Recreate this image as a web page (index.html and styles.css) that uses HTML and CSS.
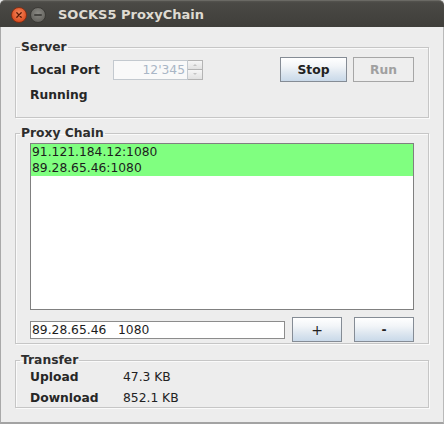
FILE: index.html
```html
<!DOCTYPE html>
<html>
<head>
<meta charset="utf-8">
<title>SOCKS5 ProxyChain</title>
<link rel="stylesheet" href="styles.css">
</head>
<body>
<div class="window">
  <div class="titlebar">
    <span class="wbtn">
      <svg width="16" height="16" viewBox="0 0 16 16">
        <defs>
          <radialGradient id="gc" cx="50%" cy="40%" r="60%">
            <stop offset="0" stop-color="#f68a5e"/>
            <stop offset="1" stop-color="#d9461a"/>
          </radialGradient>
        </defs>
        <circle cx="8" cy="8" r="7.5" fill="url(#gc)" stroke="#7a2a10" stroke-width="0.8"/>
        <path d="M5.8 5.8 L10.2 10.2 M10.2 5.8 L5.8 10.2" stroke="#5a1a06" stroke-width="1.3" stroke-linecap="round"/>
      </svg>
    </span>
    <span class="wbtn">
      <svg width="16" height="16" viewBox="0 0 16 16">
        <defs>
          <radialGradient id="gm" cx="50%" cy="40%" r="60%">
            <stop offset="0" stop-color="#8a8984"/>
            <stop offset="1" stop-color="#62615c"/>
          </radialGradient>
        </defs>
        <circle cx="8" cy="8" r="7.5" fill="url(#gm)" stroke="#33322e" stroke-width="0.8"/>
        <path d="M4.8 8 L11.2 8" stroke="#33322f" stroke-width="1.6" stroke-linecap="round"/>
      </svg>
    </span>
    <span class="title">SOCKS5 ProxyChain</span>
  </div>

  <div class="main">
    <fieldset class="group server">
      <legend>Server</legend>
      <div class="server-body">
        <span class="label">Local Port</span>
        <div class="spinner">
          <span class="spin-field">12'345</span>
          <span class="spin-btns">
            <span class="spin-btn"><span class="arr up"></span></span>
            <span class="spin-btn"><span class="arr down"></span></span>
          </span>
        </div>
        <div class="actions">
          <button class="btn stop">Stop</button>
          <button class="btn run" disabled>Run</button>
        </div>
        <span class="label status">Running</span>
      </div>
    </fieldset>

    <fieldset class="group proxy">
      <legend>Proxy Chain</legend>
      <div class="proxy-body">
        <div class="list">
          <div class="row sel">91.121.184.12:1080</div>
          <div class="row sel">89.28.65.46:1080</div>
        </div>
        <div class="entry">
          <div class="textfield">89.28.65.46   1080</div>
          <button class="btn plus">+</button>
          <button class="btn minus">-</button>
        </div>
      </div>
    </fieldset>

    <fieldset class="group transfer">
      <legend>Transfer</legend>
      <div class="transfer-body">
        <span class="label">Upload</span><span class="value">47.3 KB</span>
        <span class="label">Download</span><span class="value">852.1 KB</span>
      </div>
    </fieldset>
  </div>
</div>
</body>
</html>
```

FILE: styles.css
```css
html, body {
  margin: 0;
  padding: 0;
  background: #e6e6e6;
}

body {
  font-family: "DejaVu Sans", "Liberation Sans", sans-serif;
  font-size: 12.3px;
  color: #222;
}

.window {
  width: 444px;
  height: 424px;
  display: flex;
  flex-direction: column;
}

.titlebar {
  height: 27px;
  flex: none;
  box-sizing: border-box;
  display: flex;
  align-items: center;
  padding-left: 11px;
  padding-top: 1px;
  border-radius: 5px 5px 0 0;
  background: linear-gradient(to bottom, #55544f 0, #4a4945 2px, #3f3e3a 100%);
  border-top: 1px solid #6a6964;
}

.wbtn {
  display: flex;
  width: 16px;
  height: 16px;
  margin-right: 3px;
}

.title {
  margin-left: 9px;
  font-weight: bold;
  font-size: 13px;
  color: #dfdbd2;
}

.main {
  flex: 1;
  background: #ededed;
  border-left: 1px solid #a9a9a9;
  border-right: 1px solid #b9b9b9;
  border-bottom: 2px solid #a3a3a3;
}

.group {
  margin: 0 14px;
  padding: 0;
  min-width: 0;
  border: 1px solid #c6c6c6;
  box-shadow: 1px 1px 0 #fafafa, inset 1px 1px 0 #fafafa;
}

.group legend {
  margin-left: 4px;
  padding: 0 1px;
  font-weight: bold;
  line-height: 15px;
  color: #2e2e2e;
}

.server { margin-top: 13px; }
.proxy { margin-top: 8px; }
.transfer { margin-top: 9px; }

.label {
  font-weight: bold;
  color: #262626;
}

/* Server */
.server-body {
  padding: 2px 14px 13px;
  display: grid;
  grid-template-columns: 83px 90px 1fr auto;
  grid-template-rows: 25px 18px;
  row-gap: 4px;
  align-items: center;
  line-height: 18px;
}

.spinner {
  display: flex;
  height: 20px;
}

.spin-field {
  width: 75px;
  box-sizing: border-box;
  border: 1px solid #c3c9cf;
  background: #f9f9f9;
  color: #a9b6c6;
  text-align: right;
  padding-right: 2px;
  line-height: 18px;
}

.spin-btns {
  width: 15px;
  display: flex;
  flex-direction: column;
}

.spin-btn {
  flex: 1;
  box-sizing: border-box;
  border: 1px solid #b4b4b4;
  border-left: none;
  background: linear-gradient(#f6f6f6, #e2e2e2);
  display: flex;
  align-items: center;
  justify-content: center;
}

.spin-btn + .spin-btn { border-top: none; }

.arr {
  width: 0;
  height: 0;
  border-left: 2px solid transparent;
  border-right: 2px solid transparent;
}
.arr.up { border-bottom: 2px solid #c4c4c4; }
.arr.down { border-top: 2px solid #c4c4c4; }

.actions {
  grid-column: 4;
  display: flex;
  gap: 6px;
  height: 25px;
}

.btn {
  font-family: "DejaVu Sans", "Liberation Sans", sans-serif;
  font-size: 12.3px;
  font-weight: bold;
  color: #222;
  height: 25px;
  box-sizing: border-box;
  padding: 0;
  margin: 0;
  border: 1px solid #858c95;
  background: linear-gradient(to bottom, #ffffff 0%, #f2f5f8 35%, #dbe5ef 70%, #c9d9e9 100%);
}

.stop { width: 67px; }

.run {
  width: 61px;
  color: #a0a0a0;
  border-color: #a6a6a6;
  background: #eeeeee;
}

.status { grid-column: 1 / 3; }

/* Proxy chain */
.proxy-body {
  padding: 2px 14px 1px;
}

.list {
  height: 167px;
  box-sizing: border-box;
  border: 1px solid #808080;
  background: #ffffff;
}

.row {
  height: 16px;
  line-height: 16px;
  padding-left: 1px;
  color: #1c1c1c;
}

.row.sel {
  background: #80ff80;
}

.entry {
  margin-top: 7px;
  display: flex;
  align-items: center;
  height: 25px;
}

.textfield {
  width: 255px;
  height: 18px;
  box-sizing: border-box;
  border: 1px solid #8c8c8c;
  background: #ffffff;
  padding-left: 1px;
  line-height: 16px;
  white-space: pre;
  color: #1c1c1c;
}

.plus {
  width: 50px;
  margin-left: 7px;
  font-weight: normal;
  font-size: 14px;
}

.minus {
  width: 60px;
  margin-left: 12px;
}

/* Transfer */
.transfer-body {
  padding: 1px 14px 0;
  display: grid;
  grid-template-columns: 93px 1fr;
  grid-auto-rows: 17px;
  row-gap: 4px;
  line-height: 17px;
}

.value {
  color: #222;
}
```
